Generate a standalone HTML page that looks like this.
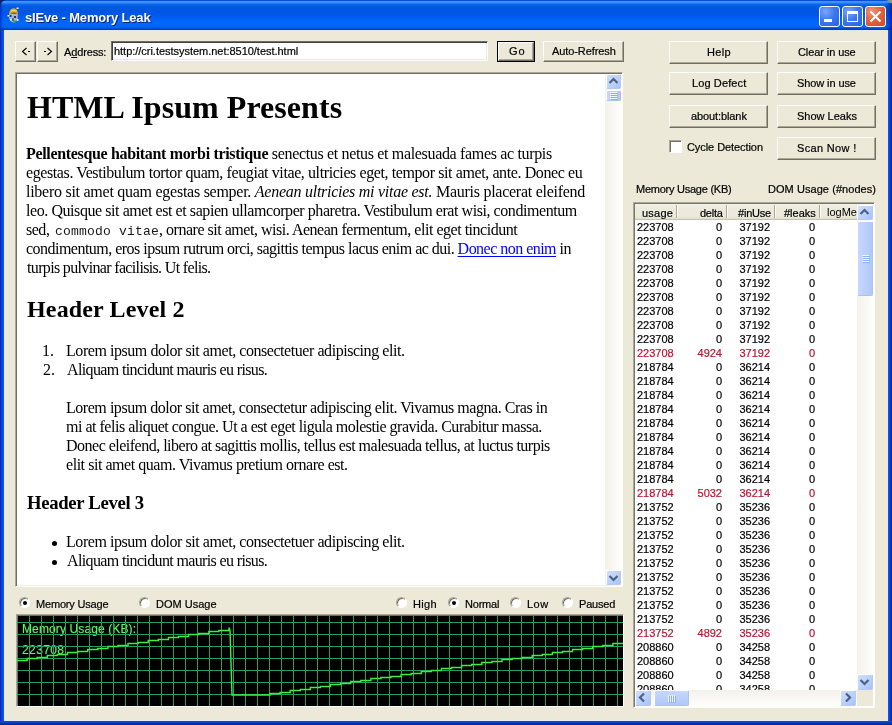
<!DOCTYPE html><html><head><meta charset="utf-8"><style>
*{box-sizing:border-box}
html,body{margin:0;padding:0}
body{width:892px;height:725px;overflow:hidden;position:relative;background:#0A246A;font-family:'Liberation Sans', sans-serif;font-size:11px;color:#000}
.a{position:absolute}
.btn{position:absolute;background:#ECE9D8;border-top:1px solid #fff;border-left:1px solid #fff;border-right:1px solid #716F64;border-bottom:1px solid #716F64;box-shadow:inset -1px -1px 0 #ACA899}
.radio{position:absolute;width:11px;height:11px;border-radius:50%;background:#fff;border-top:1px solid #ACA899;border-left:1px solid #ACA899;border-right:1px solid #fff;border-bottom:1px solid #fff;box-shadow:inset 1px 1px 0 #716F64}
.dot{position:absolute;left:2.5px;top:2.5px;width:4px;height:4px;background:#000;border-radius:50%}
</style></head><body><div class="a" style="left:0;top:0;width:892px;height:725px;will-change:transform">
<div class="a" style="left:884px;top:0;width:8px;height:8px;background:#8C9A88"></div>
<div class="a" style="left:0;top:0;width:892px;height:30px;border-radius:7px 7px 0 0;background:linear-gradient(#0A4ED6 0px,#0A4ED6 1px,#3D93FF 1px,#3D93FF 2px,#3A8DFD 2px,#3A8DFD 3px,#1C78F4 3px,#1C78F4 4px,#0C68EA 4px,#0C68EA 5px,#0560E4 5px,#0560E4 6px,#005CE2 6px,#005CE2 7px,#0059E0 7px,#0059E0 8px,#0058E0 8px,#0058E0 9px,#0057E0 9px,#0057E0 10px,#0056E2 10px,#0056E2 11px,#0056E3 11px,#0056E3 12px,#0056E5 12px,#0056E5 13px,#0057E7 13px,#0057E7 14px,#0058E9 14px,#0058E9 15px,#0059EC 15px,#0059EC 16px,#005BEF 16px,#005BEF 17px,#005DF2 17px,#005DF2 18px,#005FF5 18px,#005FF5 19px,#0062F8 19px,#0062F8 20px,#0064FA 20px,#0064FA 21px,#0066FC 21px,#0066FC 22px,#0067FD 22px,#0067FD 23px,#0068FE 23px,#0068FE 24px,#0068FE 24px,#0068FE 25px,#0067FC 25px,#0067FC 26px,#0064F7 26px,#0064F7 27px,#005DEC 27px,#005DEC 28px,#0050D6 28px,#0050D6 29px,#003FB6 29px,#003FB6 30px)"></div>
<div class="a" style="left:0;top:3px;width:3px;height:27px;background:linear-gradient(90deg,rgba(0,20,160,.55),rgba(0,40,200,0))"></div>
<div class="a" style="left:885px;top:3px;width:7px;height:27px;background:linear-gradient(90deg,rgba(0,20,160,0),rgba(0,20,150,.75))"></div>
<div class="a" style="left:0;top:30px;width:4px;height:695px;background:linear-gradient(90deg,#0A2CB8 0px,#0A2CB8 1px,#0840D0 1px,#0840D0 2px,#0A4CE0 2px,#0A4CE0 3px,#0C54E8 3px)"></div>
<div class="a" style="left:888px;top:30px;width:4px;height:695px;background:linear-gradient(90deg,#0C54E8 0px,#0C54E8 1px,#0A46D8 1px,#0A46D8 2px,#0838C4 2px,#0838C4 3px,#0424A0 3px)"></div>
<div class="a" style="left:0;top:721px;width:892px;height:4px;background:linear-gradient(#0A4CDC 0px,#0A4CDC 1px,#0840C8 1px,#0840C8 2px,#0634B4 2px,#0634B4 3px,#04249A 3px)"></div>
<div class="a" style="left:4px;top:30px;width:884px;height:691px;background:#ECE9D8;border:1px solid #E2EAF8"></div>
<svg class="a" style="left:4px;top:4px" width="20" height="22" viewBox="0 0 20 22">
<path d="M5 10 Q5.5 4.5 9.5 4.3 Q13.8 4.5 14 10 Z" fill="#E0A418"/>
<path d="M7 7.5 Q9.5 5.5 12.5 7.3" stroke="#F8D860" stroke-width="1.2" fill="none"/>
<path d="M7.5 9.3 L12.5 9.3" stroke="#904050" stroke-width="1.2"/>
<path d="M5.5 10 L13.8 10 L13.5 15 Q12 18.5 9.5 18.5 Q6.5 18 5 14 Z" fill="#C8CCA8" opacity="0.85"/>
<rect x="5.5" y="11" width="2" height="2" fill="#203070"/>
<rect x="10" y="12" width="2" height="2" fill="#203070"/>
<rect x="8" y="14" width="2" height="3" fill="#5060C0"/>
<rect x="9" y="16.5" width="3" height="2" fill="#40A040"/>
<rect x="3.5" y="11" width="2" height="1.5" fill="#E8F4FF"/>
<rect x="12.5" y="3.5" width="2" height="1.5" fill="#E8F4FF"/>
<rect x="6" y="15" width="1.5" height="1.5" fill="#E8F4FF"/>
<rect x="13" y="15" width="1.5" height="2" fill="#E8F4FF"/>
</svg>
<div class="a" style="left:819px;top:6px;width:21px;height:21px;border:1px solid #fff;border-radius:3px;background:radial-gradient(circle at 30% 25%,#7EA6F8,#3D78F0 45%,#2760E0);overflow:hidden"><div class="a" style="left:4px;top:12px;width:8px;height:3px;background:#fff"></div></div>
<div class="a" style="left:842px;top:6px;width:21px;height:21px;border:1px solid #fff;border-radius:3px;background:radial-gradient(circle at 30% 25%,#7EA6F8,#3D78F0 45%,#2760E0);overflow:hidden"><div class="a" style="left:4px;top:4px;width:11px;height:11px;border:1px solid #fff;border-top:3px solid #fff"></div></div>
<div class="a" style="left:865px;top:6px;width:21px;height:21px;border:1px solid #fff;border-radius:3px;background:radial-gradient(circle at 30% 25%,#F0957A,#E2643F 45%,#CC4A25);overflow:hidden"><svg class="a" style="left:3px;top:3px" width="13" height="13"><path d="M1.5 1.5 L11.5 11.5 M11.5 1.5 L1.5 11.5" stroke="#fff" stroke-width="2.1"/></svg></div>
<div class="btn" style="left:15px;top:41px;width:21px;height:21px;"></div>
<svg class="a" style="left:15px;top:41px" width="21" height="21"><path d="M11.5 7 L7.5 10.5 L11.5 14" stroke="#000" stroke-width="1.1" fill="none"/><rect x="13" y="10" width="2" height="1" fill="#000"/></svg>
<div class="btn" style="left:37px;top:41px;width:21px;height:21px;"></div>
<svg class="a" style="left:37px;top:41px" width="21" height="21"><rect x="7" y="10" width="2" height="1" fill="#000"/><path d="M10.5 7 L14.5 10.5 L10.5 14" stroke="#000" stroke-width="1.1" fill="none"/></svg>
<div class="a" style="left:111px;top:41px;width:377px;height:20px;background:#fff;border-top:1px solid #716F64;border-left:1px solid #716F64;border-right:1px solid #fff;border-bottom:1px solid #fff;box-shadow:inset 1px 1px 0 #404040, inset -1px -1px 0 #ECE9D8"></div>
<div class="a" style="left:497px;top:41px;width:38px;height:21px;border:1px solid #000"></div>
<div class="btn" style="left:498px;top:42px;width:36px;height:19px;"></div>
<div class="btn" style="left:543px;top:41px;width:81px;height:21px;"></div>
<div class="btn" style="left:669px;top:41px;width:99px;height:23px;"></div>
<div class="btn" style="left:777px;top:41px;width:99px;height:23px;"></div>
<div class="btn" style="left:669px;top:72px;width:99px;height:23px;"></div>
<div class="btn" style="left:777px;top:72px;width:99px;height:23px;"></div>
<div class="btn" style="left:669px;top:105px;width:99px;height:23px;"></div>
<div class="btn" style="left:777px;top:105px;width:99px;height:23px;"></div>
<div class="a" style="left:669px;top:140px;width:13px;height:13px;background:#fff;border-top:1px solid #ACA899;border-left:1px solid #ACA899;border-right:1px solid #fff;border-bottom:1px solid #fff;box-shadow:inset 1px 1px 0 #716F64"></div>
<div class="btn" style="left:777px;top:137px;width:99px;height:23px;"></div>
<div class="a" style="left:633px;top:202px;width:242px;height:506px;background:#fff;border-top:1px solid #ACA899;border-left:1px solid #ACA899;border-right:1px solid #fff;border-bottom:1px solid #fff;box-shadow:inset 1px 1px 0 #7A786E"></div>
<div class="a" style="left:635px;top:204px;width:222px;height:16px;background:linear-gradient(#F3F2EA,#EBEADB 30%,#EBEADB 80%,#E2DFD0);border-bottom:1px solid #C5C2B2"></div>
<div class="a" style="left:676px;top:205px;width:1px;height:13px;background:#ACA899;box-shadow:1px 0 0 #fff"></div>
<div class="a" style="left:726px;top:205px;width:1px;height:13px;background:#ACA899;box-shadow:1px 0 0 #fff"></div>
<div class="a" style="left:774px;top:205px;width:1px;height:13px;background:#ACA899;box-shadow:1px 0 0 #fff"></div>
<div class="a" style="left:819px;top:205px;width:1px;height:13px;background:#ACA899;box-shadow:1px 0 0 #fff"></div>
<div class="a" style="left:635px;top:204px;width:222px;height:15px;overflow:hidden"><div class="a" style="left:192px;top:2px;font-family:'Liberation Sans', sans-serif;font-size:11px;line-height:12px;white-space:nowrap">logMe</div></div>
<div class="a" style="left:635px;top:220px;width:222px;height:470px;overflow:hidden;font-size:11px;line-height:14px;-webkit-text-stroke:0.2px currentColor">
<div class="a" style="left:0;top:0px;width:222px;height:14px;color:#000"><span class="a" style="left:2px">223708</span><span class="a" style="left:42px;width:45px;text-align:right">0</span><span class="a" style="left:93px;width:42px;text-align:right">37192</span><span class="a" style="left:141px;width:39px;text-align:right">0</span></div>
<div class="a" style="left:0;top:14px;width:222px;height:14px;color:#000"><span class="a" style="left:2px">223708</span><span class="a" style="left:42px;width:45px;text-align:right">0</span><span class="a" style="left:93px;width:42px;text-align:right">37192</span><span class="a" style="left:141px;width:39px;text-align:right">0</span></div>
<div class="a" style="left:0;top:28px;width:222px;height:14px;color:#000"><span class="a" style="left:2px">223708</span><span class="a" style="left:42px;width:45px;text-align:right">0</span><span class="a" style="left:93px;width:42px;text-align:right">37192</span><span class="a" style="left:141px;width:39px;text-align:right">0</span></div>
<div class="a" style="left:0;top:42px;width:222px;height:14px;color:#000"><span class="a" style="left:2px">223708</span><span class="a" style="left:42px;width:45px;text-align:right">0</span><span class="a" style="left:93px;width:42px;text-align:right">37192</span><span class="a" style="left:141px;width:39px;text-align:right">0</span></div>
<div class="a" style="left:0;top:56px;width:222px;height:14px;color:#000"><span class="a" style="left:2px">223708</span><span class="a" style="left:42px;width:45px;text-align:right">0</span><span class="a" style="left:93px;width:42px;text-align:right">37192</span><span class="a" style="left:141px;width:39px;text-align:right">0</span></div>
<div class="a" style="left:0;top:70px;width:222px;height:14px;color:#000"><span class="a" style="left:2px">223708</span><span class="a" style="left:42px;width:45px;text-align:right">0</span><span class="a" style="left:93px;width:42px;text-align:right">37192</span><span class="a" style="left:141px;width:39px;text-align:right">0</span></div>
<div class="a" style="left:0;top:84px;width:222px;height:14px;color:#000"><span class="a" style="left:2px">223708</span><span class="a" style="left:42px;width:45px;text-align:right">0</span><span class="a" style="left:93px;width:42px;text-align:right">37192</span><span class="a" style="left:141px;width:39px;text-align:right">0</span></div>
<div class="a" style="left:0;top:98px;width:222px;height:14px;color:#000"><span class="a" style="left:2px">223708</span><span class="a" style="left:42px;width:45px;text-align:right">0</span><span class="a" style="left:93px;width:42px;text-align:right">37192</span><span class="a" style="left:141px;width:39px;text-align:right">0</span></div>
<div class="a" style="left:0;top:112px;width:222px;height:14px;color:#000"><span class="a" style="left:2px">223708</span><span class="a" style="left:42px;width:45px;text-align:right">0</span><span class="a" style="left:93px;width:42px;text-align:right">37192</span><span class="a" style="left:141px;width:39px;text-align:right">0</span></div>
<div class="a" style="left:0;top:126px;width:222px;height:14px;color:#B81430"><span class="a" style="left:2px">223708</span><span class="a" style="left:42px;width:45px;text-align:right">4924</span><span class="a" style="left:93px;width:42px;text-align:right">37192</span><span class="a" style="left:141px;width:39px;text-align:right">0</span></div>
<div class="a" style="left:0;top:140px;width:222px;height:14px;color:#000"><span class="a" style="left:2px">218784</span><span class="a" style="left:42px;width:45px;text-align:right">0</span><span class="a" style="left:93px;width:42px;text-align:right">36214</span><span class="a" style="left:141px;width:39px;text-align:right">0</span></div>
<div class="a" style="left:0;top:154px;width:222px;height:14px;color:#000"><span class="a" style="left:2px">218784</span><span class="a" style="left:42px;width:45px;text-align:right">0</span><span class="a" style="left:93px;width:42px;text-align:right">36214</span><span class="a" style="left:141px;width:39px;text-align:right">0</span></div>
<div class="a" style="left:0;top:168px;width:222px;height:14px;color:#000"><span class="a" style="left:2px">218784</span><span class="a" style="left:42px;width:45px;text-align:right">0</span><span class="a" style="left:93px;width:42px;text-align:right">36214</span><span class="a" style="left:141px;width:39px;text-align:right">0</span></div>
<div class="a" style="left:0;top:182px;width:222px;height:14px;color:#000"><span class="a" style="left:2px">218784</span><span class="a" style="left:42px;width:45px;text-align:right">0</span><span class="a" style="left:93px;width:42px;text-align:right">36214</span><span class="a" style="left:141px;width:39px;text-align:right">0</span></div>
<div class="a" style="left:0;top:196px;width:222px;height:14px;color:#000"><span class="a" style="left:2px">218784</span><span class="a" style="left:42px;width:45px;text-align:right">0</span><span class="a" style="left:93px;width:42px;text-align:right">36214</span><span class="a" style="left:141px;width:39px;text-align:right">0</span></div>
<div class="a" style="left:0;top:210px;width:222px;height:14px;color:#000"><span class="a" style="left:2px">218784</span><span class="a" style="left:42px;width:45px;text-align:right">0</span><span class="a" style="left:93px;width:42px;text-align:right">36214</span><span class="a" style="left:141px;width:39px;text-align:right">0</span></div>
<div class="a" style="left:0;top:224px;width:222px;height:14px;color:#000"><span class="a" style="left:2px">218784</span><span class="a" style="left:42px;width:45px;text-align:right">0</span><span class="a" style="left:93px;width:42px;text-align:right">36214</span><span class="a" style="left:141px;width:39px;text-align:right">0</span></div>
<div class="a" style="left:0;top:238px;width:222px;height:14px;color:#000"><span class="a" style="left:2px">218784</span><span class="a" style="left:42px;width:45px;text-align:right">0</span><span class="a" style="left:93px;width:42px;text-align:right">36214</span><span class="a" style="left:141px;width:39px;text-align:right">0</span></div>
<div class="a" style="left:0;top:252px;width:222px;height:14px;color:#000"><span class="a" style="left:2px">218784</span><span class="a" style="left:42px;width:45px;text-align:right">0</span><span class="a" style="left:93px;width:42px;text-align:right">36214</span><span class="a" style="left:141px;width:39px;text-align:right">0</span></div>
<div class="a" style="left:0;top:266px;width:222px;height:14px;color:#B81430"><span class="a" style="left:2px">218784</span><span class="a" style="left:42px;width:45px;text-align:right">5032</span><span class="a" style="left:93px;width:42px;text-align:right">36214</span><span class="a" style="left:141px;width:39px;text-align:right">0</span></div>
<div class="a" style="left:0;top:280px;width:222px;height:14px;color:#000"><span class="a" style="left:2px">213752</span><span class="a" style="left:42px;width:45px;text-align:right">0</span><span class="a" style="left:93px;width:42px;text-align:right">35236</span><span class="a" style="left:141px;width:39px;text-align:right">0</span></div>
<div class="a" style="left:0;top:294px;width:222px;height:14px;color:#000"><span class="a" style="left:2px">213752</span><span class="a" style="left:42px;width:45px;text-align:right">0</span><span class="a" style="left:93px;width:42px;text-align:right">35236</span><span class="a" style="left:141px;width:39px;text-align:right">0</span></div>
<div class="a" style="left:0;top:308px;width:222px;height:14px;color:#000"><span class="a" style="left:2px">213752</span><span class="a" style="left:42px;width:45px;text-align:right">0</span><span class="a" style="left:93px;width:42px;text-align:right">35236</span><span class="a" style="left:141px;width:39px;text-align:right">0</span></div>
<div class="a" style="left:0;top:322px;width:222px;height:14px;color:#000"><span class="a" style="left:2px">213752</span><span class="a" style="left:42px;width:45px;text-align:right">0</span><span class="a" style="left:93px;width:42px;text-align:right">35236</span><span class="a" style="left:141px;width:39px;text-align:right">0</span></div>
<div class="a" style="left:0;top:336px;width:222px;height:14px;color:#000"><span class="a" style="left:2px">213752</span><span class="a" style="left:42px;width:45px;text-align:right">0</span><span class="a" style="left:93px;width:42px;text-align:right">35236</span><span class="a" style="left:141px;width:39px;text-align:right">0</span></div>
<div class="a" style="left:0;top:350px;width:222px;height:14px;color:#000"><span class="a" style="left:2px">213752</span><span class="a" style="left:42px;width:45px;text-align:right">0</span><span class="a" style="left:93px;width:42px;text-align:right">35236</span><span class="a" style="left:141px;width:39px;text-align:right">0</span></div>
<div class="a" style="left:0;top:364px;width:222px;height:14px;color:#000"><span class="a" style="left:2px">213752</span><span class="a" style="left:42px;width:45px;text-align:right">0</span><span class="a" style="left:93px;width:42px;text-align:right">35236</span><span class="a" style="left:141px;width:39px;text-align:right">0</span></div>
<div class="a" style="left:0;top:378px;width:222px;height:14px;color:#000"><span class="a" style="left:2px">213752</span><span class="a" style="left:42px;width:45px;text-align:right">0</span><span class="a" style="left:93px;width:42px;text-align:right">35236</span><span class="a" style="left:141px;width:39px;text-align:right">0</span></div>
<div class="a" style="left:0;top:392px;width:222px;height:14px;color:#000"><span class="a" style="left:2px">213752</span><span class="a" style="left:42px;width:45px;text-align:right">0</span><span class="a" style="left:93px;width:42px;text-align:right">35236</span><span class="a" style="left:141px;width:39px;text-align:right">0</span></div>
<div class="a" style="left:0;top:406px;width:222px;height:14px;color:#B81430"><span class="a" style="left:2px">213752</span><span class="a" style="left:42px;width:45px;text-align:right">4892</span><span class="a" style="left:93px;width:42px;text-align:right">35236</span><span class="a" style="left:141px;width:39px;text-align:right">0</span></div>
<div class="a" style="left:0;top:420px;width:222px;height:14px;color:#000"><span class="a" style="left:2px">208860</span><span class="a" style="left:42px;width:45px;text-align:right">0</span><span class="a" style="left:93px;width:42px;text-align:right">34258</span><span class="a" style="left:141px;width:39px;text-align:right">0</span></div>
<div class="a" style="left:0;top:434px;width:222px;height:14px;color:#000"><span class="a" style="left:2px">208860</span><span class="a" style="left:42px;width:45px;text-align:right">0</span><span class="a" style="left:93px;width:42px;text-align:right">34258</span><span class="a" style="left:141px;width:39px;text-align:right">0</span></div>
<div class="a" style="left:0;top:448px;width:222px;height:14px;color:#000"><span class="a" style="left:2px">208860</span><span class="a" style="left:42px;width:45px;text-align:right">0</span><span class="a" style="left:93px;width:42px;text-align:right">34258</span><span class="a" style="left:141px;width:39px;text-align:right">0</span></div>
<div class="a" style="left:0;top:462px;width:222px;height:14px;color:#000"><span class="a" style="left:2px">208860</span><span class="a" style="left:42px;width:45px;text-align:right">0</span><span class="a" style="left:93px;width:42px;text-align:right">34258</span><span class="a" style="left:141px;width:39px;text-align:right">0</span></div>
</div>
<div class="a" style="left:857px;top:204px;width:16px;height:486px;background:linear-gradient(90deg,#F3F1EC,#FEFEFB)"></div>
<div class="a" style="left:857px;top:205px;width:16px;height:15px;border:1px solid #fff;border-right-color:#B8C8EE;border-bottom-color:#B8C8EE;border-radius:2px;background:linear-gradient(135deg,#D0DEFC,#B9D0FA 60%,#A8C2F5)"><svg class="a" style="left:-1px;top:-1px" width="16" height="15"><path d="M3.5 9 L7.5 5 L11.5 9" stroke="#4D6185" stroke-width="2.2" fill="none"/></svg></div>
<div class="a" style="left:857px;top:221px;width:16px;height:75px;border:1px solid #fff;border-right-color:#AFC0EA;border-bottom-color:#AFC0EA;border-radius:2px;background:linear-gradient(90deg,#C8D6FB,#BCD0FC 50%,#B0C8F8)"><div class="a" style="left:4px;top:33px;width:7px;height:1px;background:#EEF4FE;box-shadow:1px 1px 0 #8CB0F8"></div><div class="a" style="left:4px;top:35px;width:7px;height:1px;background:#EEF4FE;box-shadow:1px 1px 0 #8CB0F8"></div><div class="a" style="left:4px;top:37px;width:7px;height:1px;background:#EEF4FE;box-shadow:1px 1px 0 #8CB0F8"></div><div class="a" style="left:4px;top:39px;width:7px;height:1px;background:#EEF4FE;box-shadow:1px 1px 0 #8CB0F8"></div></div>
<div class="a" style="left:857px;top:674px;width:16px;height:16px;border:1px solid #fff;border-right-color:#B8C8EE;border-bottom-color:#B8C8EE;border-radius:2px;background:linear-gradient(135deg,#D0DEFC,#B9D0FA 60%,#A8C2F5)"><svg class="a" style="left:-1px;top:-1px" width="16" height="16"><path d="M3.5 6 L7.5 10 L11.5 6" stroke="#4D6185" stroke-width="2.2" fill="none"/></svg></div>
<div class="a" style="left:635px;top:690px;width:222px;height:16px;background:linear-gradient(#F3F1EC,#FEFEFB)"></div>
<div class="a" style="left:635px;top:690px;width:16px;height:16px;border:1px solid #fff;border-right-color:#B8C8EE;border-bottom-color:#B8C8EE;border-radius:2px;background:linear-gradient(135deg,#D0DEFC,#B9D0FA 60%,#A8C2F5)"><svg class="a" style="left:-1px;top:-1px" width="16" height="16"><path d="M9 3.5 L5 7.5 L9 11.5" stroke="#4D6185" stroke-width="2.2" fill="none"/></svg></div>
<div class="a" style="left:654px;top:690px;width:35px;height:16px;border:1px solid #fff;border-right-color:#AFC0EA;border-bottom-color:#AFC0EA;border-radius:2px;background:linear-gradient(180deg,#C8D6FB,#BCD0FC 50%,#B0C8F8)"><div class="a" style="left:13px;top:4px;width:1px;height:7px;background:#EEF4FE;box-shadow:1px 1px 0 #8CB0F8"></div><div class="a" style="left:15px;top:4px;width:1px;height:7px;background:#EEF4FE;box-shadow:1px 1px 0 #8CB0F8"></div><div class="a" style="left:17px;top:4px;width:1px;height:7px;background:#EEF4FE;box-shadow:1px 1px 0 #8CB0F8"></div><div class="a" style="left:19px;top:4px;width:1px;height:7px;background:#EEF4FE;box-shadow:1px 1px 0 #8CB0F8"></div></div>
<div class="a" style="left:840px;top:690px;width:16px;height:16px;border:1px solid #fff;border-right-color:#B8C8EE;border-bottom-color:#B8C8EE;border-radius:2px;background:linear-gradient(135deg,#D0DEFC,#B9D0FA 60%,#A8C2F5)"><svg class="a" style="left:-1px;top:-1px" width="16" height="16"><path d="M6 3.5 L10 7.5 L6 11.5" stroke="#4D6185" stroke-width="2.2" fill="none"/></svg></div>
<div class="a" style="left:857px;top:690px;width:16px;height:16px;background:#ECE9D8"></div>
<div class="a" style="left:15px;top:72px;width:608px;height:515px;background:#fff;border-top:1px solid #ACA899;border-left:1px solid #ACA899;border-right:1px solid #fff;border-bottom:1px solid #fff;box-shadow:inset 1px 1px 0 #716F64, inset -1px -1px 0 #F1EFE2"></div>
<div class="a" style="left:605px;top:74px;width:17px;height:512px;background:linear-gradient(90deg,#F3F1EC,#FEFEFB)"></div>
<div class="a" style="left:606px;top:74px;width:15px;height:15px;border:1px solid #fff;border-right-color:#B8C8EE;border-bottom-color:#B8C8EE;border-radius:2px;background:linear-gradient(135deg,#D0DEFC,#B9D0FA 60%,#A8C2F5)"><svg class="a" style="left:-1px;top:-1px" width="15" height="15"><path d="M3.5 9 L7.5 5 L11.5 9" stroke="#4D6185" stroke-width="2.2" fill="none"/></svg></div>
<div class="a" style="left:606px;top:90px;width:15px;height:11px;border:1px solid #fff;border-right-color:#AFC0EA;border-bottom-color:#AFC0EA;border-radius:2px;background:linear-gradient(90deg,#C8D6FB,#BCD0FC 50%,#B0C8F8)"><div class="a" style="left:3px;top:1px;width:7px;height:1px;background:#EEF4FE;box-shadow:1px 1px 0 #8CB0F8"></div><div class="a" style="left:3px;top:3px;width:7px;height:1px;background:#EEF4FE;box-shadow:1px 1px 0 #8CB0F8"></div><div class="a" style="left:3px;top:5px;width:7px;height:1px;background:#EEF4FE;box-shadow:1px 1px 0 #8CB0F8"></div><div class="a" style="left:3px;top:7px;width:7px;height:1px;background:#EEF4FE;box-shadow:1px 1px 0 #8CB0F8"></div></div>
<div class="a" style="left:606px;top:570px;width:15px;height:15px;border:1px solid #fff;border-right-color:#B8C8EE;border-bottom-color:#B8C8EE;border-radius:2px;background:linear-gradient(135deg,#D0DEFC,#B9D0FA 60%,#A8C2F5)"><svg class="a" style="left:-1px;top:-1px" width="15" height="15"><path d="M3.5 6 L7.5 10 L11.5 6" stroke="#4D6185" stroke-width="2.2" fill="none"/></svg></div>
<div class="a" style="left:52px;top:541px;width:5px;height:5px;border-radius:50%;background:#000"></div>
<div class="a" style="left:52px;top:560px;width:5px;height:5px;border-radius:50%;background:#000"></div>
<div class="radio" style="left:19px;top:597px"><div class=dot></div></div>
<div class="radio" style="left:139px;top:597px"></div>
<div class="radio" style="left:396px;top:597px"></div>
<div class="radio" style="left:448px;top:597px"><div class=dot></div></div>
<div class="radio" style="left:510px;top:597px"></div>
<div class="radio" style="left:562px;top:597px"></div>
<div class="a" style="left:16px;top:614px;width:608px;height:93px;background:#000;border-top:1px solid #ACA899;border-left:1px solid #ACA899;border-right:1px solid #fff;border-bottom:1px solid #fff;box-shadow:inset 1px 1px 0 #716F64"></div>
<div class="a" style="left:25px;top:10px;white-space:nowrap;font-family:'Liberation Sans', sans-serif;font-size:13px;font-weight:bold;line-height:16px;color:#fff;text-shadow:1px 1px 0 #0A1E6E;letter-spacing:-0.167px;;">sIEve - Memory Leak</div>
<div class="a" style="left:64px;top:46px;white-space:nowrap;font-family:'Liberation Sans', sans-serif;font-size:11px;line-height:12px;letter-spacing:-0.143px;-webkit-text-stroke:0.2px currentColor;">A<u>d</u>dress:</div>
<div class="a" style="left:114px;top:45px;white-space:nowrap;font-family:'Liberation Sans', sans-serif;font-size:11px;line-height:12px;letter-spacing:-0.026px;-webkit-text-stroke:0.2px currentColor;">http://cri.testsystem.net:8510/test.html</div>
<div class="a" style="left:509px;top:45px;white-space:nowrap;font-family:'Liberation Sans', sans-serif;font-size:11px;line-height:12px;letter-spacing:1.000px;-webkit-text-stroke:0.2px currentColor;">Go</div>
<div class="a" style="left:552px;top:45px;white-space:nowrap;font-family:'Liberation Sans', sans-serif;font-size:11px;line-height:12px;letter-spacing:-0.091px;-webkit-text-stroke:0.2px currentColor;">Auto-Refresh</div>
<div class="a" style="left:707px;top:46px;white-space:nowrap;font-family:'Liberation Sans', sans-serif;font-size:11px;line-height:12px;letter-spacing:0.333px;-webkit-text-stroke:0.2px currentColor;">Help</div>
<div class="a" style="left:798px;top:46px;white-space:nowrap;font-family:'Liberation Sans', sans-serif;font-size:11px;line-height:12px;letter-spacing:-0.091px;-webkit-text-stroke:0.2px currentColor;">Clear in use</div>
<div class="a" style="left:692px;top:77px;white-space:nowrap;font-family:'Liberation Sans', sans-serif;font-size:11px;line-height:12px;letter-spacing:0.111px;-webkit-text-stroke:0.2px currentColor;">Log Defect</div>
<div class="a" style="left:797px;top:77px;white-space:nowrap;font-family:'Liberation Sans', sans-serif;font-size:11px;line-height:12px;letter-spacing:-0.100px;-webkit-text-stroke:0.2px currentColor;">Show in use</div>
<div class="a" style="left:691px;top:110px;white-space:nowrap;font-family:'Liberation Sans', sans-serif;font-size:11px;line-height:12px;letter-spacing:-0.100px;-webkit-text-stroke:0.2px currentColor;">about:blank</div>
<div class="a" style="left:797px;top:110px;white-space:nowrap;font-family:'Liberation Sans', sans-serif;font-size:11px;line-height:12px;letter-spacing:0.000px;-webkit-text-stroke:0.2px currentColor;">Show Leaks</div>
<div class="a" style="left:687px;top:141px;white-space:nowrap;font-family:'Liberation Sans', sans-serif;font-size:11px;line-height:12px;letter-spacing:-0.071px;-webkit-text-stroke:0.2px currentColor;">Cycle Detection</div>
<div class="a" style="left:797px;top:142px;white-space:nowrap;font-family:'Liberation Sans', sans-serif;font-size:11px;line-height:12px;letter-spacing:0.333px;-webkit-text-stroke:0.2px currentColor;">Scan Now !</div>
<div class="a" style="left:636px;top:183px;white-space:nowrap;font-family:'Liberation Sans', sans-serif;font-size:11px;line-height:12px;letter-spacing:-0.250px;-webkit-text-stroke:0.2px currentColor;">Memory Usage (KB)</div>
<div class="a" style="left:768px;top:183px;white-space:nowrap;font-family:'Liberation Sans', sans-serif;font-size:11px;line-height:12px;letter-spacing:0.059px;-webkit-text-stroke:0.2px currentColor;">DOM Usage (#nodes)</div>
<div class="a" style="left:642px;top:207px;white-space:nowrap;font-family:'Liberation Sans', sans-serif;font-size:11px;line-height:12px;letter-spacing:0.250px;-webkit-text-stroke:0.2px currentColor;">usage</div>
<div class="a" style="left:700px;top:207px;white-space:nowrap;font-family:'Liberation Sans', sans-serif;font-size:11px;line-height:12px;letter-spacing:-0.250px;-webkit-text-stroke:0.2px currentColor;">delta</div>
<div class="a" style="left:738px;top:207px;white-space:nowrap;font-family:'Liberation Sans', sans-serif;font-size:11px;line-height:12px;letter-spacing:-0.200px;-webkit-text-stroke:0.2px currentColor;">#inUse</div>
<div class="a" style="left:784px;top:207px;white-space:nowrap;font-family:'Liberation Sans', sans-serif;font-size:11px;line-height:12px;letter-spacing:0.000px;-webkit-text-stroke:0.2px currentColor;">#leaks</div>
<div class="a" style="left:27px;top:89px;white-space:nowrap;font-family:'Liberation Serif', serif;font-size:32px;font-weight:bold;line-height:37px;letter-spacing:0.056px;;">HTML Ipsum Presents</div>
<div class="a" style="left:26px;top:144px;white-space:nowrap;font-family:'Liberation Serif', serif;font-size:16px;line-height:19px;letter-spacing:-0.337px;;"><b>Pellentesque habitant morbi tristique</b> senectus et netus et malesuada fames ac turpis</div>
<div class="a" style="left:26px;top:163px;white-space:nowrap;font-family:'Liberation Serif', serif;font-size:16px;line-height:19px;letter-spacing:-0.404px;;">egestas. Vestibulum tortor quam, feugiat vitae, ultricies eget, tempor sit amet, ante. Donec eu</div>
<div class="a" style="left:26px;top:182px;white-space:nowrap;font-family:'Liberation Serif', serif;font-size:16px;line-height:19px;letter-spacing:-0.264px;;">libero sit amet quam egestas semper. <i>Aenean ultricies mi vitae est.</i> Mauris placerat eleifend</div>
<div class="a" style="left:26px;top:201px;white-space:nowrap;font-family:'Liberation Serif', serif;font-size:16px;line-height:19px;letter-spacing:-0.433px;;">leo. Quisque sit amet est et sapien ullamcorper pharetra. Vestibulum erat wisi, condimentum</div>
<div class="a" style="left:26px;top:220px;white-space:nowrap;font-family:'Liberation Serif', serif;font-size:16px;line-height:19px;letter-spacing:-0.478px;;">sed, <span style="font-family:'Liberation Mono',monospace;font-size:13px;letter-spacing:0.2px;margin-left:2px;color:#1a1a1a">commodo vitae</span>, ornare sit amet, wisi. Aenean fermentum, elit eget tincidunt</div>
<div class="a" style="left:26px;top:239px;white-space:nowrap;font-family:'Liberation Serif', serif;font-size:16px;line-height:19px;letter-spacing:-0.523px;;">condimentum, eros ipsum rutrum orci, sagittis tempus lacus enim ac dui. <span style="color:#0000FF;text-decoration:underline;text-underline-offset:1.5px">Donec non enim</span> in</div>
<div class="a" style="left:27px;top:258px;white-space:nowrap;font-family:'Liberation Serif', serif;font-size:16px;line-height:19px;letter-spacing:-0.657px;;">turpis pulvinar facilisis. Ut felis.</div>
<div class="a" style="left:27px;top:295px;white-space:nowrap;font-family:'Liberation Serif', serif;font-size:24px;font-weight:bold;line-height:28px;letter-spacing:0.154px;;">Header Level 2</div>
<div class="a" style="left:42px;top:341px;white-space:nowrap;font-family:'Liberation Serif', serif;font-size:16px;line-height:19px;letter-spacing:0.000px;;">1.</div>
<div class="a" style="left:66px;top:341px;white-space:nowrap;font-family:'Liberation Serif', serif;font-size:16px;line-height:19px;letter-spacing:-0.446px;;">Lorem ipsum dolor sit amet, consectetuer adipiscing elit.</div>
<div class="a" style="left:43px;top:360px;white-space:nowrap;font-family:'Liberation Serif', serif;font-size:16px;line-height:19px;letter-spacing:0.000px;;">2.</div>
<div class="a" style="left:67px;top:360px;white-space:nowrap;font-family:'Liberation Serif', serif;font-size:16px;line-height:19px;letter-spacing:-0.636px;;">Aliquam tincidunt mauris eu risus.</div>
<div class="a" style="left:66px;top:398px;white-space:nowrap;font-family:'Liberation Serif', serif;font-size:16px;line-height:19px;letter-spacing:-0.462px;;">Lorem ipsum dolor sit amet, consectetur adipiscing elit. Vivamus magna. Cras in</div>
<div class="a" style="left:66px;top:417px;white-space:nowrap;font-family:'Liberation Serif', serif;font-size:16px;line-height:19px;letter-spacing:-0.488px;;">mi at felis aliquet congue. Ut a est eget ligula molestie gravida. Curabitur massa.</div>
<div class="a" style="left:66px;top:436px;white-space:nowrap;font-family:'Liberation Serif', serif;font-size:16px;line-height:19px;letter-spacing:-0.506px;;">Donec eleifend, libero at sagittis mollis, tellus est malesuada tellus, at luctus turpis</div>
<div class="a" style="left:66px;top:455px;white-space:nowrap;font-family:'Liberation Serif', serif;font-size:16px;line-height:19px;letter-spacing:-0.457px;;">elit sit amet quam. Vivamus pretium ornare est.</div>
<div class="a" style="left:27px;top:492px;white-space:nowrap;font-family:'Liberation Serif', serif;font-size:18.7px;font-weight:bold;line-height:22px;letter-spacing:-0.308px;;">Header Level 3</div>
<div class="a" style="left:66px;top:532px;white-space:nowrap;font-family:'Liberation Serif', serif;font-size:16px;line-height:19px;letter-spacing:-0.446px;;">Lorem ipsum dolor sit amet, consectetuer adipiscing elit.</div>
<div class="a" style="left:67px;top:551px;white-space:nowrap;font-family:'Liberation Serif', serif;font-size:16px;line-height:19px;letter-spacing:-0.636px;;">Aliquam tincidunt mauris eu risus.</div>
<div class="a" style="left:36px;top:598px;white-space:nowrap;font-family:'Liberation Sans', sans-serif;font-size:11px;line-height:12px;letter-spacing:-0.182px;-webkit-text-stroke:0.2px currentColor;">Memory Usage</div>
<div class="a" style="left:156px;top:598px;white-space:nowrap;font-family:'Liberation Sans', sans-serif;font-size:11px;line-height:12px;letter-spacing:0.000px;-webkit-text-stroke:0.2px currentColor;">DOM Usage</div>
<div class="a" style="left:413px;top:598px;white-space:nowrap;font-family:'Liberation Sans', sans-serif;font-size:11px;line-height:12px;letter-spacing:0.333px;-webkit-text-stroke:0.2px currentColor;">High</div>
<div class="a" style="left:465px;top:598px;white-space:nowrap;font-family:'Liberation Sans', sans-serif;font-size:11px;line-height:12px;letter-spacing:-0.200px;-webkit-text-stroke:0.2px currentColor;">Normal</div>
<div class="a" style="left:527px;top:598px;white-space:nowrap;font-family:'Liberation Sans', sans-serif;font-size:11px;line-height:12px;letter-spacing:0.500px;-webkit-text-stroke:0.2px currentColor;">Low</div>
<div class="a" style="left:579px;top:598px;white-space:nowrap;font-family:'Liberation Sans', sans-serif;font-size:11px;line-height:12px;letter-spacing:-0.200px;-webkit-text-stroke:0.2px currentColor;">Paused</div>
<div class="a" style="left:22px;top:623px;white-space:nowrap;font-family:'Liberation Sans', sans-serif;font-size:12px;line-height:13px;color:#5CFA5C;-webkit-text-stroke:0.15px #5CFA5C;letter-spacing:0.118px;;">Memory Usage (KB):</div>
<div class="a" style="left:22px;top:644px;white-space:nowrap;font-family:'Liberation Sans', sans-serif;font-size:12px;line-height:13px;color:#5CFA5C;-webkit-text-stroke:0.15px #5CFA5C;letter-spacing:0.400px;;">223708</div>
<svg class="a" style="left:17px;top:616px" width="606" height="90" viewBox="17 616 606 90"><rect x="29" y="616" width="1" height="90" fill="#22A064"/><rect x="41" y="616" width="1" height="90" fill="#22A064"/><rect x="53" y="616" width="1" height="90" fill="#22A064"/><rect x="65" y="616" width="1" height="90" fill="#22A064"/><rect x="77" y="616" width="1" height="90" fill="#22A064"/><rect x="89" y="616" width="1" height="90" fill="#22A064"/><rect x="101" y="616" width="1" height="90" fill="#22A064"/><rect x="113" y="616" width="1" height="90" fill="#22A064"/><rect x="125" y="616" width="1" height="90" fill="#22A064"/><rect x="137" y="616" width="1" height="90" fill="#22A064"/><rect x="149" y="616" width="1" height="90" fill="#22A064"/><rect x="161" y="616" width="1" height="90" fill="#22A064"/><rect x="173" y="616" width="1" height="90" fill="#22A064"/><rect x="185" y="616" width="1" height="90" fill="#22A064"/><rect x="197" y="616" width="1" height="90" fill="#22A064"/><rect x="209" y="616" width="1" height="90" fill="#22A064"/><rect x="221" y="616" width="1" height="90" fill="#22A064"/><rect x="233" y="616" width="1" height="90" fill="#22A064"/><rect x="245" y="616" width="1" height="90" fill="#22A064"/><rect x="257" y="616" width="1" height="90" fill="#22A064"/><rect x="269" y="616" width="1" height="90" fill="#22A064"/><rect x="281" y="616" width="1" height="90" fill="#22A064"/><rect x="293" y="616" width="1" height="90" fill="#22A064"/><rect x="305" y="616" width="1" height="90" fill="#22A064"/><rect x="317" y="616" width="1" height="90" fill="#22A064"/><rect x="329" y="616" width="1" height="90" fill="#22A064"/><rect x="341" y="616" width="1" height="90" fill="#22A064"/><rect x="353" y="616" width="1" height="90" fill="#22A064"/><rect x="365" y="616" width="1" height="90" fill="#22A064"/><rect x="377" y="616" width="1" height="90" fill="#22A064"/><rect x="389" y="616" width="1" height="90" fill="#22A064"/><rect x="401" y="616" width="1" height="90" fill="#22A064"/><rect x="413" y="616" width="1" height="90" fill="#22A064"/><rect x="425" y="616" width="1" height="90" fill="#22A064"/><rect x="437" y="616" width="1" height="90" fill="#22A064"/><rect x="449" y="616" width="1" height="90" fill="#22A064"/><rect x="461" y="616" width="1" height="90" fill="#22A064"/><rect x="473" y="616" width="1" height="90" fill="#22A064"/><rect x="485" y="616" width="1" height="90" fill="#22A064"/><rect x="497" y="616" width="1" height="90" fill="#22A064"/><rect x="509" y="616" width="1" height="90" fill="#22A064"/><rect x="521" y="616" width="1" height="90" fill="#22A064"/><rect x="533" y="616" width="1" height="90" fill="#22A064"/><rect x="545" y="616" width="1" height="90" fill="#22A064"/><rect x="557" y="616" width="1" height="90" fill="#22A064"/><rect x="569" y="616" width="1" height="90" fill="#22A064"/><rect x="581" y="616" width="1" height="90" fill="#22A064"/><rect x="593" y="616" width="1" height="90" fill="#22A064"/><rect x="605" y="616" width="1" height="90" fill="#22A064"/><rect x="617" y="616" width="1" height="90" fill="#22A064"/><rect x="17" y="622" width="606" height="1" fill="#22A064"/><rect x="17" y="634" width="606" height="1" fill="#22A064"/><rect x="17" y="646" width="606" height="1" fill="#22A064"/><rect x="17" y="658" width="606" height="1" fill="#22A064"/><rect x="17" y="670" width="606" height="1" fill="#22A064"/><rect x="17" y="682" width="606" height="1" fill="#22A064"/><rect x="17" y="694" width="606" height="1" fill="#22A064"/><path d="M17.0 660.5 L27.1 660.5 L27.1 658.5 L37.2 658.5 L37.2 657.5 L47.3 657.5 L47.3 655.5 L57.4 655.5 L57.4 654.5 L67.5 654.5 L67.5 652.5 L77.6 652.5 L77.6 651.5 L87.7 651.5 L87.7 649.5 L97.8 649.5 L97.8 648.5 L107.9 648.5 L107.9 646.5 L118.0 646.5 L118.0 645.5 L128.0 645.5 L128.0 643.5 L138.1 643.5 L138.1 642.5 L148.2 642.5 L148.2 640.5 L158.3 640.5 L158.3 639.5 L168.4 639.5 L168.4 637.5 L178.5 637.5 L178.5 636.5 L188.6 636.5 L188.6 634.5 L198.7 634.5 L198.7 633.5 L208.8 633.5 L208.8 631.5 L218.9 631.5 L218.9 630.5 L229.0 630.5 L229.0 627.5 L230.0 630.5 L232.0 695.0 L270.0 695.0 L270.0 693.5 L280.1 693.5 L280.1 692.5 L290.2 692.5 L290.2 690.5 L300.3 690.5 L300.3 689.5 L310.3 689.5 L310.3 687.5 L320.4 687.5 L320.4 686.5 L330.5 686.5 L330.5 684.5 L340.6 684.5 L340.6 683.5 L350.7 683.5 L350.7 681.5 L360.8 681.5 L360.8 680.5 L370.9 680.5 L370.9 678.5 L380.9 678.5 L380.9 677.5 L391.0 677.5 L391.0 676.5 L401.1 676.5 L401.1 674.5 L411.2 674.5 L411.2 673.5 L421.3 673.5 L421.3 671.5 L431.4 671.5 L431.4 670.5 L441.5 670.5 L441.5 668.5 L451.5 668.5 L451.5 667.5 L461.6 667.5 L461.6 665.5 L471.7 665.5 L471.7 664.5 L481.8 664.5 L481.8 662.5 L491.9 662.5 L491.9 661.5 L502.0 661.5 L502.0 659.5 L512.1 659.5 L512.1 658.5 L522.1 658.5 L522.1 657.5 L532.2 657.5 L532.2 655.5 L542.3 655.5 L542.3 654.5 L552.4 654.5 L552.4 652.5 L562.5 652.5 L562.5 651.5 L572.6 651.5 L572.6 649.5 L582.7 649.5 L582.7 648.5 L592.7 648.5 L592.7 646.5 L602.8 646.5 L602.8 645.5 L612.9 645.5 L612.9 643.5 L623.0 643.5" stroke="#3CF03C" stroke-width="1.4" fill="none"/></svg></div></body></html>
